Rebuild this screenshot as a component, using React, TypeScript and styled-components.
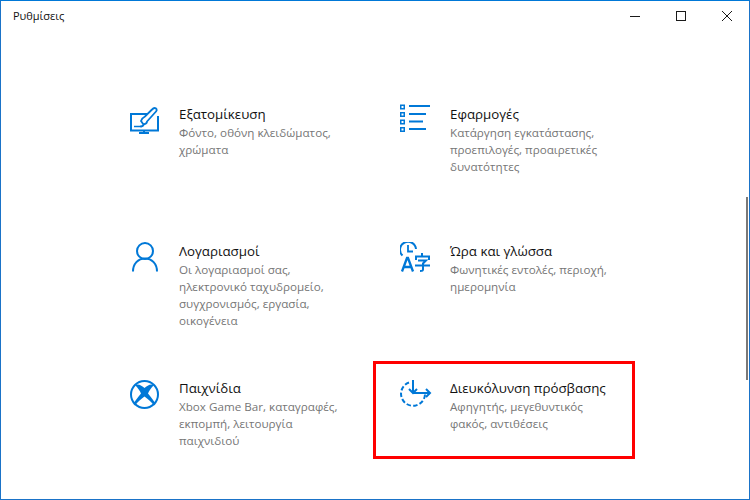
import React from "react";
import styled, { createGlobalStyle } from "styled-components";

const GlobalStyle = createGlobalStyle`
  html, body {
    margin: 0;
    padding: 0;
    background: #fff;
  }
  *, *::before, *::after {
    box-sizing: border-box;
  }
`;

const brandBlue = "#0078d7";

const PaintIcon = () => (
  <svg width="30" height="28" viewBox="0 0 30 28" fill="none" stroke={brandBlue}>
    <path d="M19 7H1v16.500h27V9" strokeWidth="2" />
    <path d="M9 26h10M14 24v2" strokeWidth="2" />
    <path d="M4 19.500h8" strokeWidth="1.500" />
    <path d="M11 14l2.500 3.500c2.500-.5 3.500-2 3.500-3L26 4.500c1.500-1.500.5-3.500-1.500-3.500-1 0-2 1-3 2L15 9.500c-2 1-3.500 2.500-4 4.500z" strokeWidth="1.800" fill="#fff" />
    <path d="M10 19.500c2 0 3.500-1 3.500-2" strokeWidth="1.700" />
  </svg>
);

const AppsIcon = () => (
  <svg width="30" height="28" viewBox="0 0 30 28" fill={brandBlue}>
    {[0.5, 8, 15.5, 23].map((y) => (
      <path key={y} fillRule="evenodd" d={`M0 ${y}h5v5H0zM1.500 ${y + 1.500}v2h2v-2z`} />
    ))}
    <rect x="9" y="1" width="21" height="2" />
    <rect x="9" y="9" width="17" height="2" />
    <rect x="9" y="16.500" width="14" height="2" />
    <rect x="9" y="24" width="17" height="2" />
  </svg>
);

const UserIcon = () => (
  <svg width="28" height="30" viewBox="0 0 28 30" fill="none" stroke={brandBlue} strokeWidth="2">
    <circle cx="14" cy="9" r="8" />
    <path d="M2 29.500c0-7.500 5-13 12-13s12 5.500 12 13" />
  </svg>
);

const TimeLanguageIcon = () => (
  <svg width="30" height="30" viewBox="0 0 30 30" fill="none" stroke={brandBlue}>
    <path d="M2.500 13.500A8 8 0 1 1 16 7" strokeWidth="2" />
    <path d="M8 3v6.500h5" strokeWidth="1.800" />
    <path d="M2 29.500L7 16h1l5 13.500M4 25h7" strokeWidth="2.300" />
    <path d="M22 11v3M16 18v-3.500h13V18M18 18.500h8l-3 3v6c0 1-.5 1.500-3 1.500M15 23.500h15" strokeWidth="2" />
  </svg>
);

const XboxIcon = () => (
  <svg width="29" height="29" viewBox="0 0 29 29" fill={brandBlue}>
    <circle cx="14.500" cy="14.500" r="13.500" fill="none" stroke={brandBlue} strokeWidth="2" />
    <path d="M5 5C9 3.500 12 6 14.500 8C17 6 20 3.500 24 5C21 8 19 11 18 13.500C21 17 24 21 25.500 24L24 25.500C21 21.500 18 19 14.500 16.500C11 19 8 21.500 5 25.500L3.500 24C5 21 8 17 11 13.500C10 11 8 8 5 5z" />
  </svg>
);

const AccessIcon = () => (
  <svg width="32" height="28" viewBox="0 0 32 28" fill="none" stroke={brandBlue} strokeWidth="2">
    <path d="M9 2.500A12 12 0 1 0 25 13" strokeDasharray="4.500 2.200" />
    <path d="M13 0v13M9 9l4 4 4-4" />
    <path d="M13 13h17M26 9l4 4-4 4" />
  </svg>
);

const Window = styled.div`
  position: relative;
  width: 750px;
  height: 500px;
  background: #fff;
  border: 1px solid #1a73c8;
  border-top-color: ${brandBlue};
  overflow: hidden;
  font-family: "Open Sans", "Noto Sans", sans-serif;
`;

const TitleBar = styled.header`
  display: flex;
  align-items: center;
  justify-content: space-between;
  height: 29px;
  padding-left: 12px;
`;

const AppTitle = styled.span`
  font-size: 11px;
  color: #111;
`;

const WindowControls = styled.div`
  display: flex;
  margin-right: -1px;
`;

const ControlButton = styled.div`
  display: flex;
  align-items: center;
  justify-content: center;
  width: 46px;
  height: 29px;
`;

const SettingsGrid = styled.main`
  display: grid;
  grid-template-columns: 271px 271px;
  grid-auto-rows: 137px;
  padding: 74px 0 0 129px;
`;

const Card = styled.div<{ $highlighted?: boolean }>`
  position: relative;
  display: flex;
  align-items: flex-start;

  ${(p) =>
    p.$highlighted &&
    `
    &::after {
      content: "";
      position: absolute;
      left: -28px;
      top: -17px;
      width: 262px;
      height: 98px;
      border: 3px solid #f00;
    }
  `}
`;

const IconSlot = styled.div<{ $top: number; $left: number }>`
  flex: none;
  width: 49px;
  height: 36px;
  padding-top: ${(p) => p.$top}px;
  padding-left: ${(p) => Math.max(p.$left, 0)}px;
  margin-left: ${(p) => Math.min(p.$left, 0)}px;
  margin-right: ${(p) => -Math.min(p.$left, 0)}px;

  svg {
    display: block;
  }
`;

const CardText = styled.div`
  display: flex;
  flex-direction: column;
  width: 180px;
`;

const CardTitle = styled.div`
  font-size: 13.300px;
  line-height: 20px;
  color: #111;
  white-space: nowrap;
`;

const CardDescription = styled.div`
  font-size: 11.650px;
  line-height: 17px;
  color: #767676;
  white-space: pre-line;
`;

const ScrollThumb = styled.div`
  position: absolute;
  right: 1px;
  top: 196px;
  width: 2px;
  height: 183px;
  background: #797979;
`;

const settings = [
  { title: "Εξατομίκευση", description: "Φόντο, οθόνη κλειδώματος,\nχρώματα", icon: <PaintIcon />, top: 3, left: 0 },
  { title: "Εφαρμογές", description: "Κατάργηση εγκατάστασης,\nπροεπιλογές, προαιρετικές\nδυνατότητες", icon: <AppsIcon />, top: 0, left: -1 },
  { title: "Λογαριασμοί", description: "Οι λογαριασμοί σας,\nηλεκτρονικό ταχυδρομείο,\nσυγχρονισμός, εργασία,\nοικογένεια", icon: <UserIcon />, top: 1, left: 1 },
  { title: "Ώρα και γλώσσα", description: "Φωνητικές εντολές, περιοχή,\nημερομηνία", icon: <TimeLanguageIcon />, top: 1, left: -1 },
  { title: "Παιχνίδια", description: "Xbox Game Bar, καταγραφές,\nεκπομπή, λειτουργία\nπαιχνιδιού", icon: <XboxIcon />, top: 2, left: 0 },
  { title: "Διευκόλυνση πρόσβασης", description: "Αφηγητής, μεγεθυντικός\nφακός, αντιθέσεις", icon: <AccessIcon />, top: 2, left: -1, highlighted: true },
];

const App = () => {
  return (
    <Window>
      <GlobalStyle />
      <TitleBar>
        <AppTitle>Ρυθμίσεις</AppTitle>
        <WindowControls>
          <ControlButton>
            <svg width="10" height="10" viewBox="0 0 10 10" stroke="#1a1a1a" fill="none">
              <path d="M0 5.500h10" />
            </svg>
          </ControlButton>
          <ControlButton>
            <svg width="10" height="10" viewBox="0 0 10 10" stroke="#1a1a1a" fill="none">
              <rect x=".5" y=".5" width="9" height="9" />
            </svg>
          </ControlButton>
          <ControlButton>
            <svg width="10" height="10" viewBox="0 0 10 10" stroke="#1a1a1a" fill="none">
              <path d="M0 0l10 10M10 0L0 10" />
            </svg>
          </ControlButton>
        </WindowControls>
      </TitleBar>
      <SettingsGrid>
        {settings.map((item) => (
          <Card key={item.title} $highlighted={item.highlighted}>
            <IconSlot $top={item.top} $left={item.left}>
              {item.icon}
            </IconSlot>
            <CardText>
              <CardTitle>{item.title}</CardTitle>
              <CardDescription>{item.description}</CardDescription>
            </CardText>
          </Card>
        ))}
      </SettingsGrid>
      <ScrollThumb />
    </Window>
  );
};

export default App;
